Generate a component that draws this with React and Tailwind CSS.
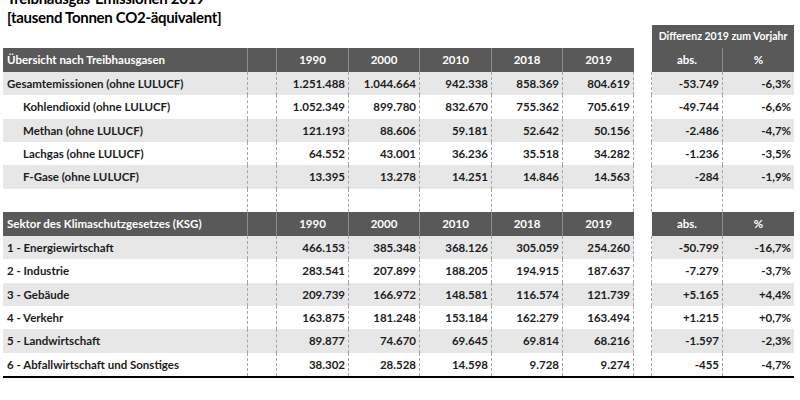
import React from "react";

const gases = [
  { label: "Gesamtemissionen (ohne LULUCF)", indent: false, v: ["1.251.488", "1.044.664", "942.338", "858.369", "804.619"], abs: "-53.749", pct: "-6,3%" },
  { label: "Kohlendioxid (ohne LULUCF)", indent: true, v: ["1.052.349", "899.780", "832.670", "755.362", "705.619"], abs: "-49.744", pct: "-6,6%" },
  { label: "Methan  (ohne LULUCF)", indent: true, v: ["121.193", "88.606", "59.181", "52.642", "50.156"], abs: "-2.486", pct: "-4,7%" },
  { label: "Lachgas  (ohne LULUCF)", indent: true, v: ["64.552", "43.001", "36.236", "35.518", "34.282"], abs: "-1.236", pct: "-3,5%" },
  { label: "F-Gase  (ohne LULUCF)", indent: true, v: ["13.395", "13.278", "14.251", "14.846", "14.563"], abs: "-284", pct: "-1,9%" },
];

const sectors = [
  { label: "1 - Energiewirtschaft", v: ["466.153", "385.348", "368.126", "305.059", "254.260"], abs: "-50.799", pct: "-16,7%" },
  { label: "2 - Industrie", v: ["283.541", "207.899", "188.205", "194.915", "187.637"], abs: "-7.279", pct: "-3,7%" },
  { label: "3 - Gebäude", v: ["209.739", "166.972", "148.581", "116.574", "121.739"], abs: "+5.165", pct: "+4,4%" },
  { label: "4 - Verkehr", v: ["163.875", "181.248", "153.184", "162.279", "163.494"], abs: "+1.215", pct: "+0,7%" },
  { label: "5 - Landwirtschaft", v: ["89.877", "74.670", "69.645", "69.814", "68.216"], abs: "-1.597", pct: "-2,3%" },
  { label: "6 - Abfallwirtschaft und Sonstiges", v: ["38.302", "28.528", "14.598", "9.728", "9.274"], abs: "-455", pct: "-4,7%" },
];

const years = ["1990", "2000", "2010", "2018", "2019"];
const yearW = ["w-[72px]", "w-[71px]", "w-[72px]", "w-[71px]", "w-[71px]"];

// grey header row with white text
const HeadRow = ({ title }) => (
  <div className="flex h-[24px] text-white">
    <div className="w-[245px] bg-[#595959] border-r border-[#8c8c8c] flex items-center pl-[4px]">{title}</div>
    <div className="w-[29px] bg-[#595959] border-r border-[#8c8c8c]"></div>
    {years.map((y, i) => (
      <div key={y} className={`${yearW[i]} bg-[#595959] flex items-center justify-center ${i < 4 ? "border-r border-[#8c8c8c]" : ""}`}>{y}</div>
    ))}
    <div className="w-[18px]"></div>
    <div className="w-[71px] bg-[#595959] border-r border-[#8c8c8c] flex items-center justify-center">abs.</div>
    <div className="w-[71px] bg-[#595959] flex items-center justify-center">%</div>
  </div>
);

const DataRow = ({ row, shade }) => {
  const bg = shade ? "bg-[#e7e7e7]" : "bg-white";
  const dash = "border-r border-dashed border-[#a6a6a6]";
  return (
    <div className="flex h-[23.33px] text-[#1c1c1c]">
      <div className={`w-[245px] ${bg} ${dash} flex items-center ${row && row.indent ? "pl-[20px]" : "pl-[4px]"}`}>{row ? row.label : ""}</div>
      <div className={`w-[29px] ${bg} ${dash}`}></div>
      {years.map((y, i) => (
        <div key={y} className={`${yearW[i]} ${bg} ${dash} flex items-center justify-end pr-[3px]`}>{row ? row.v[i] : ""}</div>
      ))}
      <div className={`w-[18px] bg-white ${dash}`}></div>
      <div className={`w-[71px] ${bg} ${dash} flex items-center justify-end pr-[3px]`}>{row ? row.abs : ""}</div>
      <div className={`w-[71px] ${bg} flex items-center justify-end pr-[3px]`}>{row ? row.pct : ""}</div>
    </div>
  );
};

export default function App() {
  return (
    <div className="w-[800px] h-[400px] overflow-hidden bg-white font-['Lato',sans-serif] font-bold">
      <div className="-mt-[11px] pl-[7px] text-[15px] leading-[19px] tracking-[-0.3px] text-black">
        <div>Treibhausgas-Emissionen 2019</div>
        <div className="h-[17px]">[tausend Tonnen CO2-äquivalent]</div>
      </div>
      <div className="ml-[3px] w-[791px] text-[11.5px]">
        <div className="flex h-[23px] text-white">
          <div className="w-[649px]"></div>
          <div className="w-[142px] bg-[#595959] flex items-center justify-center text-[10.5px]">Differenz 2019 zum Vorjahr</div>
        </div>
        <HeadRow title="Übersicht nach Treibhausgasen" />
        {gases.map((g, i) => (
          <DataRow key={g.label} row={g} shade={i % 2 === 0} />
        ))}
        <DataRow row={null} shade={false} />
        <HeadRow title="Sektor des Klimaschutzgesetzes (KSG)" />
        <div className="border-b-2 border-black">
          {sectors.map((s, i) => (
            <DataRow key={s.label} row={s} shade={i % 2 === 0} />
          ))}
        </div>
      </div>
    </div>
  );
}
